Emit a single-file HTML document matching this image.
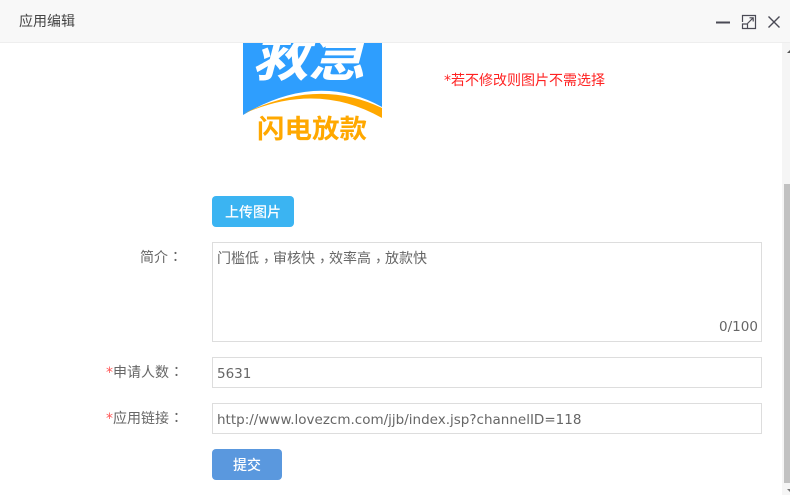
<!DOCTYPE html>
<html lang="zh">
<head>
<meta charset="utf-8">
<title>应用编辑</title>
<style>
html,body{margin:0;padding:0;width:790px;height:495px;overflow:hidden;background:#fff;}
body{position:relative;font-family:"DejaVu Sans","Noto Sans CJK SC",sans-serif;color:#666;}
.a{position:absolute;white-space:nowrap;}
.head{left:0;top:0;width:790px;height:42px;background:#f8f8f8;border-bottom:1px solid #eee;}
.title{left:19px;top:12px;font-size:14px;line-height:18px;color:#444;font-family:"Noto Sans CJK SC",sans-serif;}
.box{box-sizing:border-box;left:212px;width:550px;border:1px solid #ddd;background:#fff;}
.val{left:217px;font-size:13.5px;line-height:20px;color:#666;}
.lab{font-size:14px;line-height:20px;color:#666;}
.lab i{font-style:normal;color:#f55;}
.p{position:relative;left:4px;top:-1px;}
.btn{left:212px;text-align:center;color:#fff;font-size:14px;font-weight:500;border-radius:4px;font-family:"Noto Sans CJK SC",sans-serif;}
</style>
</head>
<body>
<div class="a head"></div>
<div class="a title">应用编辑</div>

<svg class="a" style="left:700px;top:0" width="90" height="43" viewBox="0 0 90 43" fill="none" stroke="#4a4a55">
<path d="M16 22.5H30" stroke-width="2"/>
<path d="M42.5 22V15.5H55.5V28.5H48" stroke-width="1.2"/>
<path d="M42.5 24H47.5V28.5H42.5Z" stroke-width="1.2"/>
<path d="M47.5 23.5L53 18M49.5 17.8H53.2V21.5" stroke-width="1.2"/>
<path d="M68.5 16.5L79.5 27.5M79.5 16.5L68.5 27.5" stroke-width="1.4"/>
</svg>

<svg class="a" style="left:243px;top:43px" width="139" height="100" viewBox="0 0 139 100">
<path d="M0 0H139V64Q74 28 0 72Z" fill="#2e9efe"/>
<path d="M0 71Q74 34 139 65V75Q74 38 0 71Z" fill="#ffa800"/>
<text x="9" y="33" font-family="Noto Sans CJK SC,sans-serif" font-size="54" font-weight="700" font-style="italic" fill="#fff" textLength="113" lengthAdjust="spacingAndGlyphs">救急</text>
<text x="14" y="95" font-family="Noto Sans CJK SC,sans-serif" font-size="26" font-weight="700" fill="#ffa800" textLength="110" lengthAdjust="spacingAndGlyphs">闪电放款</text>
</svg>

<div class="a" style="left:444px;top:72px;font-size:14px;line-height:18px;color:#f22;">*若不修改则图片不需选择</div>

<div class="a btn" style="top:196px;width:82px;height:31px;line-height:32px;background:#3bb4f2;">上传图片</div>

<div class="a lab" style="left:140px;top:248px;">简介<span class="p">：</span></div>
<div class="a box" style="top:242px;height:100px;"></div>
<div class="a" style="left:217px;top:249px;font-size:14px;line-height:20px;color:#666;">门槛低<span class="p">，</span>审核快<span class="p">，</span>效率高<span class="p">，</span>放款快</div>
<div class="a" style="left:719px;top:317px;font-size:13.5px;line-height:20px;color:#666;">0/100</div>

<div class="a lab" style="left:106px;top:363px;"><i>*</i>申请人数<span class="p">：</span></div>
<div class="a box" style="top:357px;height:31px;"></div>
<div class="a val" style="top:364px;">5631</div>

<div class="a lab" style="left:106px;top:409px;"><i>*</i>应用链接<span class="p">：</span></div>
<div class="a box" style="top:403px;height:31px;"></div>
<div class="a val" style="top:410px;">http://www.lovezcm.com/jjb/index.jsp?channelID=118</div>

<div class="a btn" style="top:449px;width:70px;height:31px;line-height:32px;background:#5a98de;">提交</div>

<div class="a" style="left:782px;top:43px;width:8px;height:452px;background:#f5f5f5;"></div>
<div class="a" style="left:784px;top:184px;width:6px;height:299px;background:#c1c1c1;"></div>
<svg class="a" style="left:782px;top:43px" width="8" height="452" viewBox="0 0 8 452">
<path d="M8 7V10H5Z" fill="#555"/>
<path d="M5 446H8V449Z" fill="#777"/>
</svg>
</body>
</html>
